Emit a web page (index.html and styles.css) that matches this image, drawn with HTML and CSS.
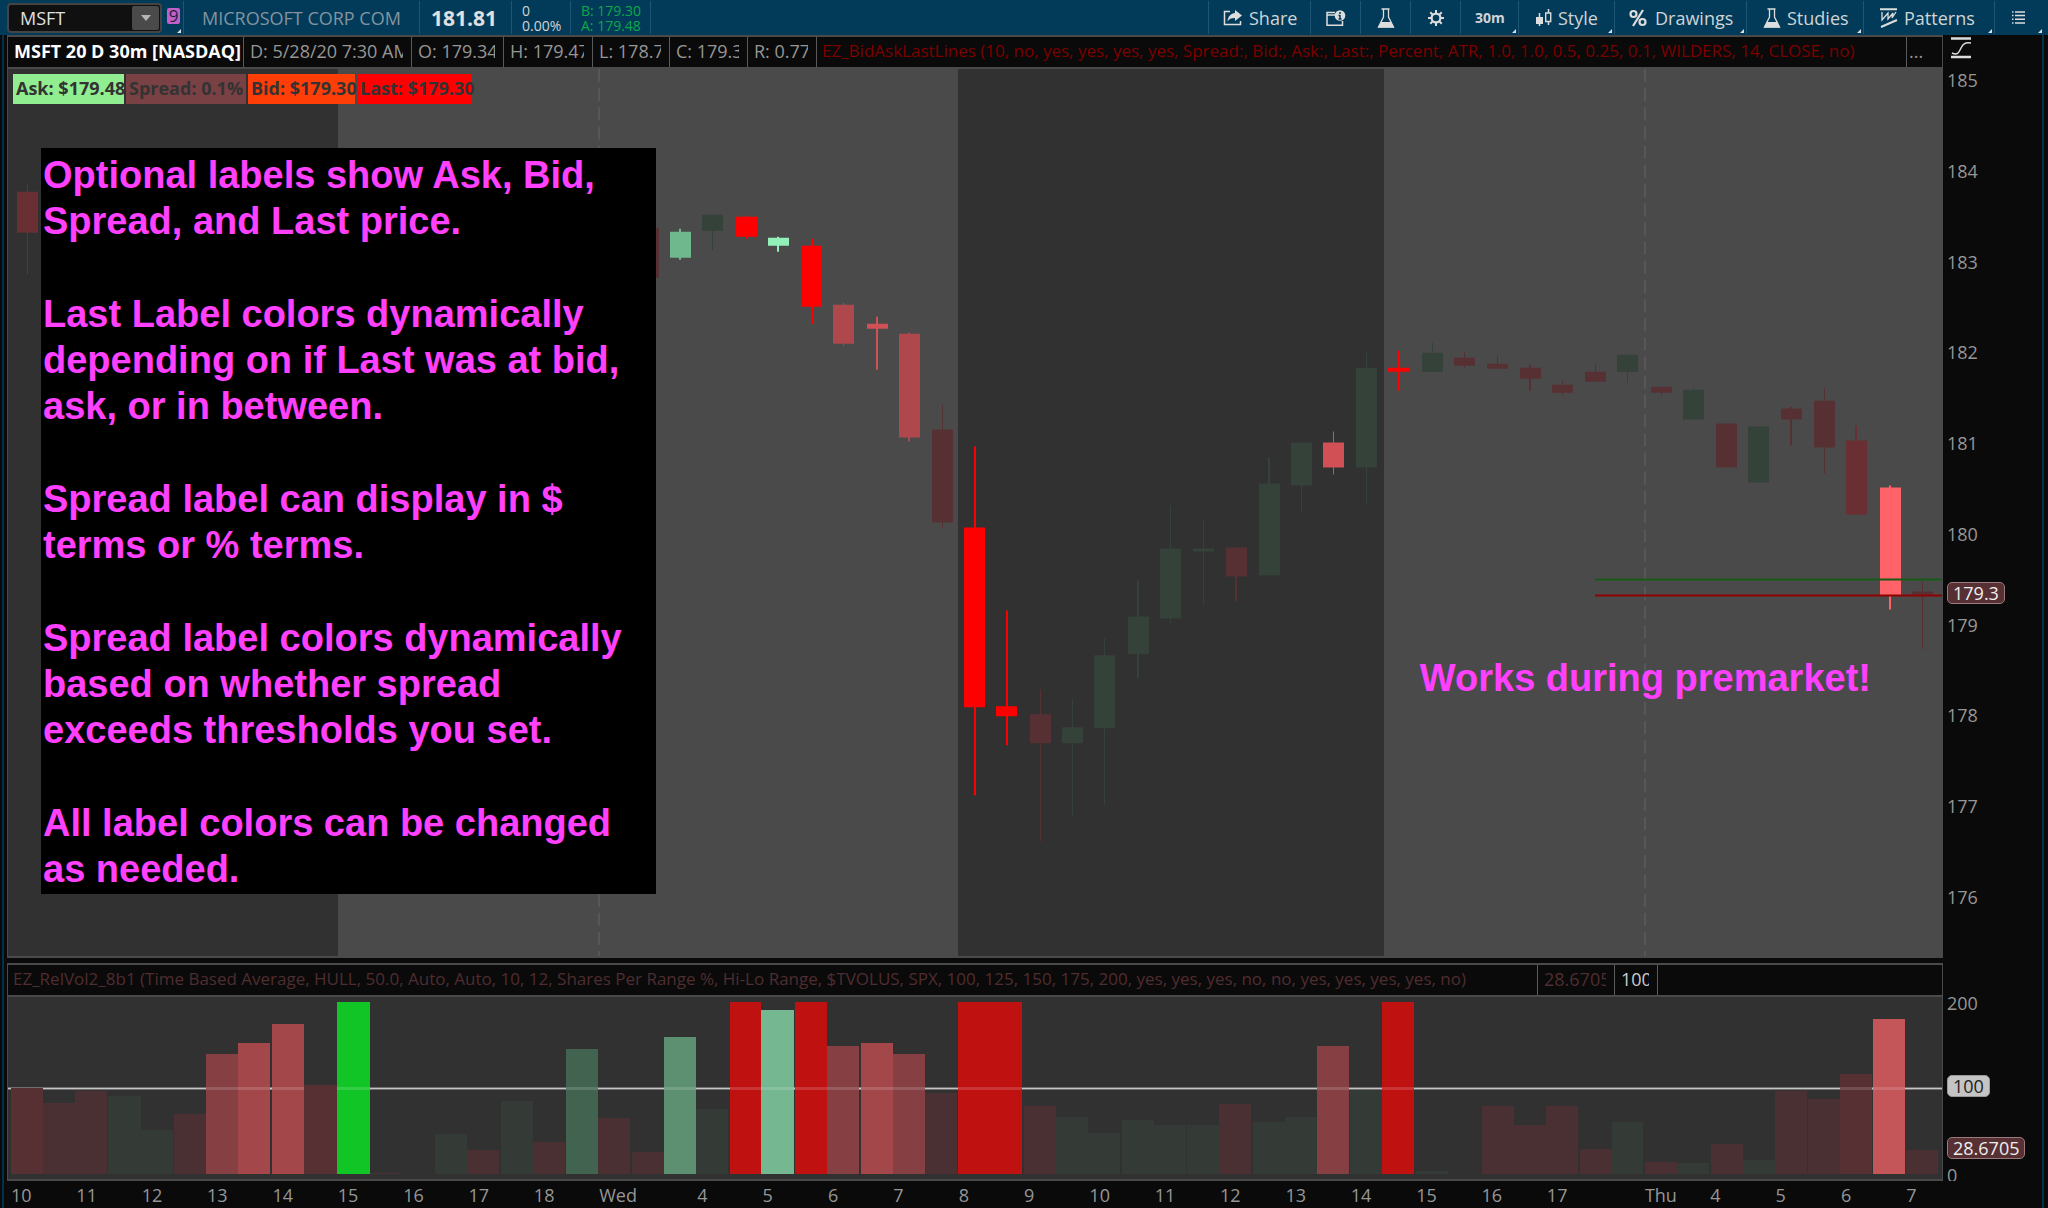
FILE: index.html
```html
<!DOCTYPE html>
<html lang="en">
<head>
<meta charset="utf-8">
<title>MSFT chart</title>
<link rel="stylesheet" href="styles.css">
</head>
<body>
<header class="toolbar">
  <div class="symbol">
    <input class="symbol-input" type="text" value="MSFT" aria-label="Symbol">
    <button class="symbol-drop" aria-label="Recent symbols"><svg width="10" height="6" viewBox="0 0 10 6"><path d="M0 0h10L5 6z" fill="#b5b5b5"/></svg></button>
  </div>
  <button class="link-badge has-menu" aria-label="Link group 9"><span class="badge-num">9</span></button>
  <div class="cell company">MICROSOFT CORP COM</div>
  <div class="cell last">181.81</div>
  <div class="cell change"><span>0</span><span>0.00%</span></div>
  <div class="cell quote"><span>B: 179.30</span><span>A: 179.48</span></div>
  <div class="cell spacer"></div>
  <button class="cell tool share"><svg width="20" height="16" viewBox="0 0 20 16"><path d="M7 1.500H1.500v13h16V11" fill="none" stroke="#ddd" stroke-width="1.500"/><path d="M12 0l7 5.500-7 5.500V8C8 8 6 9 4.500 11.500 5 6 8 3.500 12 3z" fill="#ddd"/></svg>Share</button>
  <button class="cell tool icon-only" aria-label="Chart info"><svg width="20" height="16" viewBox="0 0 20 16"><path d="M9 2.500H1v12.700h15.500V11M1 5h8" fill="none" stroke="#ddd" stroke-width="1.500"/><circle cx="14" cy="5.500" r="5.300" fill="#ddd"/><path d="M14 2v2M14 5v4.500M12.500 5.500H14M12.500 9h3" stroke="#023a58" stroke-width="1.500"/></svg></button>
  <button class="cell tool icon-only" aria-label="Edit studies"><svg width="18" height="20" viewBox="0 0 18 20"><path d="M4.500 1h8M6.500 1v8L1.500 19h15L11.500 9V1" fill="none" stroke="#ddd" stroke-width="1.300"/><path d="M4 14h10l3 5.500H1z" fill="#ddd"/></svg></button>
  <button class="cell tool icon-only" aria-label="Settings"><svg width="18" height="18" viewBox="0 0 18 18"><circle cx="9" cy="9" r="4.400" fill="none" stroke="#ddd" stroke-width="2.200"/><path d="M9 1v3M9 14v3M1 9h3M14 9h3M3.300 3.300l2.300 2.300M12.400 12.400l2.300 2.300M3.300 14.700l2.300-2.300M12.400 5.600l2.300-2.300" stroke="#ddd" stroke-width="2"/></svg></button>
  <button class="cell tool interval has-menu">30m</button>
  <button class="cell tool style has-menu"><svg width="16" height="18" viewBox="0 0 16 18"><path d="M3.500 4v13M12.500 0v4M12.500 12v4" stroke="#ddd" stroke-width="1.500"/><path d="M0 8h7v7H0z" fill="#ddd"/><path d="M9.700 4h5v8.500h-5z" fill="none" stroke="#ddd" stroke-width="1.400"/></svg>Style</button>
  <button class="cell tool drawings has-menu"><svg width="18" height="18" viewBox="0 0 18 18" fill="none" stroke="#ddd" stroke-width="2.200"><circle cx="4.500" cy="5" r="3"/><circle cx="13.500" cy="13" r="3"/><path d="M14 1L4 17"/></svg>Drawings</button>
  <button class="cell tool studies has-menu"><svg width="18" height="20" viewBox="0 0 18 20"><path d="M4.500 1h8M6.500 1v8L1.500 19h15L11.500 9V1" fill="none" stroke="#ddd" stroke-width="1.300"/><path d="M4 14h10l3 5.500H1z" fill="#ddd"/></svg>Studies</button>
  <button class="cell tool patterns has-menu"><svg width="18" height="20" viewBox="0 0 18 20" fill="none" stroke="#ddd"><path d="M0 1.200h17M1 19L17 12" stroke-width="2"/><path d="M2 4v8L8 5v6l5-6-1 5 4-6" stroke-width="1.300"/></svg>Patterns</button>
  <button class="cell tool menu has-menu" aria-label="Menu"><svg width="13" height="13" viewBox="0 0 13 13" stroke="#ddd" stroke-width="1.500"><path d="M3 1h10M3 4.600h10M3 8.300h10M3 12h10"/><path d="M0 1h1.500M0 4.600h1.500M0 8.300h1.500M0 12h1.500"/></svg></button>
</header>

<main class="workspace">
  <section class="pane price-pane">
    <div class="info-row">
      <h1 class="info title">MSFT 20 D 30m [NASDAQ]</h1>
      <div class="info date"><span>D: 5/28/20 7:30 AM</span></div>
      <div class="info open"><span>O: 179.34</span></div>
      <div class="info high"><span>H: 179.47</span></div>
      <div class="info low"><span>L: 178.7</span></div>
      <div class="info close"><span>C: 179.35</span></div>
      <div class="info range"><span>R: 0.77</span></div>
      <div class="info study"><span>EZ_BidAskLastLines (10, no, yes, yes, yes, yes, Spread:, Bid:, Ask:, Last:, Percent, ATR, 1.0, 1.0, 0.5, 0.25, 0.1, WILDERS, 14, CLOSE, no)</span></div>
      <div class="info more">...</div>
    </div>
    <div class="plot price-plot">
      <svg class="plot-svg" viewBox="8 69 1934 888" preserveAspectRatio="none" aria-hidden="true">
        <path fill="#313131" d="M8 69h330v888H8zM958 69h426v888H958z"/>
        <path fill="#4a4a4a" d="M338 69h620v888H338zM1384 69h558v888h-558z"/>
        <path stroke="#575757" stroke-width="2" stroke-dasharray="13 6.200" d="M599 69v888M1645 69v888"/>
        <g fill="#573034" stroke="none">
          <path d="M638 228h21v50h-21zM932 430h21v93h-21zM942 405h1v124h-1zM1030 715h21v29h-21zM1040 690h1v152h-1zM1226 548h21v29h-21zM1235 577h2v25h-2z"/>
          <path d="M1454 358h21v8h-21zM1464 352h1v17h-1zM1487 364h21v5h-21zM1497 356h1v12h-1zM1520 368h21v11h-21zM1529 365h2v26h-2zM1552 385h21v8h-21zM1562 381h1v15h-1zM1585 372h21v10h-21zM1595 365h1v9h-1zM1651 387h21v6h-21zM1661 393h1v4h-1zM1716 424h21v44h-21zM1781 409h21v11h-21zM1790 407h2v39h-2zM1814 401h21v47h-21zM1824 388h1v86h-1zM1912 592h21v3h-21zM1922 582h1v68h-1z"/>
        </g>
        <path fill="#692f33" d="M17 192h21v41H17zM27 184h1v91h-1zM1846 441h21v74h-21zM1855 426h2v16h-2z"/>
        <path fill="#344239" d="M702 215h21v16h-21zM712 231h1v19h-1zM1062 728h21v16h-21zM1072 700h1v116h-1zM1094 656h21v73h-21zM1104 639h1v166h-1zM1128 617h21v38h-21zM1137 581h2v98h-2zM1160 549h21v70h-21zM1170 506h1v118h-1zM1193 549h21v3h-21zM1203 520h1v85h-1zM1259 484h21v92h-21zM1268 458h2v26h-2zM1291 443h21v43h-21zM1301 486h1v28h-1zM1356 368h21v100h-21zM1366 352h1v152h-1zM1422 353h21v19h-21zM1432 343h1v10h-1zM1617 355h21v17h-21zM1627 372h1v11h-1zM1683 390h21v30h-21zM1693 388h1v2h-1zM1748 427h21v56h-21z"/>
        <path fill="#6fb88e" d="M670 232h21v26h-21zM679 229h2v31h-2z"/>
        <path fill="#92f0b8" d="M768 238h21v8h-21zM777 237h2v15h-2z"/>
        <path fill="#ae484c" d="M833 305h21v39h-21zM843 303h1v43h-1zM899 334h21v104h-21zM908 333h2v109h-2z"/>
        <path fill="#d05056" d="M867 324h21v5h-21zM876 317h2v53h-2zM1323 443h21v25h-21zM1333 432h1v43h-1z"/>
        <path fill="#ff6369" d="M1880 488h21v108h-21zM1889 486h2v124h-2z"/>
        <path fill="#f00" d="M736 217h21v20h-21zM745 216h2v23h-2zM801 246h21v61h-21zM811 239h2v85h-2zM964 528h21v180h-21zM974 447h2v349h-2zM996 707h21v10h-21zM1006 611h2v135h-2zM1388 368h21v4h-21zM1398 351h2v40h-2z"/>
        <path fill="#155a15" d="M1595 579h347v2h-347z"/>
        <path fill="#8f0000" d="M1595 595h347v2h-347z"/>
      </svg>
      <div class="tags">
        <span class="tag ask">Ask: $179.48</span>
        <span class="tag spread">Spread: 0.1%</span>
        <span class="tag bid">Bid: $179.30</span>
        <span class="tag last-tag">Last: $179.30</span>
      </div>
      <div class="note">
        <p>Optional labels show Ask, Bid,<br>Spread, and Last price.</p>
        <p>Last Label colors dynamically<br>depending on if Last was at bid,<br>ask, or in between.</p>
        <p>Spread label can display in $<br>terms or % terms.</p>
        <p>Spread label colors dynamically<br>based on whether spread<br>exceeds thresholds you set.</p>
        <p>All label colors can be changed<br>as needed.</p>
      </div>
      <p class="premarket">Works during premarket!</p>
    </div>
  </section>
  <aside class="axis price-axis">
    <svg class="fit" width="20" height="22" viewBox="0 0 20 22" fill="none" stroke="#ddd"><path d="M0 1.500h20M0 20h20" stroke-width="2.500"/><path d="M1 16c6 3 7-1 9-5s4-6 10-5" stroke-width="1.500"/></svg>
    <ol class="prices"><li>185</li><li>184</li><li>183</li><li>182</li><li>181</li><li>180</li><li>179</li><li>178</li><li>177</li><li>176</li></ol>
    <span class="bubble price-bubble">179.3</span>
  </aside>
  <div class="splitter"></div>
  <section class="pane volume-pane">
    <div class="info-row">
      <div class="info vol-study"><span>EZ_RelVol2_8b1 (Time Based Average, HULL, 50.0, Auto, Auto, 10, 12, Shares Per Range %, Hi-Lo Range, $TVOLUS, SPX, 100, 125, 150, 175, 200, yes, yes, yes, no, no, yes, yes, yes, yes, no)</span></div>
      <div class="info vol-value"><span>28.6705</span></div>
      <div class="info vol-base"><span>100</span></div>
      <div class="info rest"></div>
    </div>
    <div class="plot volume-plot">
      <svg class="plot-svg" viewBox="8 997 1934 182" preserveAspectRatio="none" aria-hidden="true">
        <path fill="#313131" d="M8 997h1934v182H8z"/>
        <path fill="#6f6f6f" d="M8 1087h1934v3H8z"/>
        <path fill="#c4c4c4" d="M8 1088h1934v1H8z"/>
        <path fill="#4a3033" d="M43 1103h32v71h-32zM75 1091h32v83h-32zM174 1114h32v60h-32zM370 1173h31v1h-31zM467 1150h32v24h-32zM533 1142h32v32h-32zM598 1118h32v56h-32zM632 1152h32v22h-32zM925 1093h32v81h-32zM1024 1106h32v68h-32zM1219 1104h32v70h-32zM1482 1106h32v68h-32zM1514 1125h32v49h-32zM1546 1106h32v68h-32zM1580 1149h32v25h-32zM1645 1162h32v12h-32zM1711 1144h32v30h-32zM1775 1091h32v83h-32zM1808 1099h32v75h-32zM1906 1150h32v24h-32z"/>
        <path fill="#343b37" d="M108 1096h33v78h-33zM141 1130h32v44h-32zM435 1134h32v40h-32zM501 1101h32v73h-32zM696 1109h32v65h-32zM1056 1117h32v57h-32zM1088 1133h32v41h-32zM1122 1120h32v54h-32zM1154 1125h32v49h-32zM1187 1125h32v49h-32zM1253 1122h32v52h-32zM1285 1117h32v57h-32zM1350 1090h32v84h-32zM1416 1171h32v3h-32zM1612 1122h31v52h-31zM1677 1163h32v11h-32zM1743 1160h32v14h-32z"/>
        <path fill="#573034" d="M11 1088h32v86H11zM304 1085h33v89h-33zM1840 1074h32v100h-32z"/>
        <path fill="#863f43" d="M206 1054h32v120h-32zM827 1046h32v128h-32zM893 1054h32v120h-32zM1317 1046h32v128h-32z"/>
        <path fill="#a4474b" d="M238 1043h32v131h-32zM272 1024h32v150h-32zM861 1043h32v131h-32z"/>
        <path fill="#c45559" d="M1873 1019h32v155h-32z"/>
        <path fill="#c01111" d="M730 1002h31v172h-31zM795 1002h32v172h-32zM958 1002h64v172h-64zM1382 1002h32v172h-32z"/>
        <path fill="#11c526" d="M337 1002h33v172h-33z"/>
        <path fill="#426350" d="M566 1049h32v125h-32z"/>
        <path fill="#5d9071" d="M664 1037h32v137h-32z"/>
        <path fill="#74b790" d="M761 1010h33v164h-33z"/>
        <path fill="#fff" fill-opacity="0.15" d="M206 1087h98v3h-98zM337 1087h33v3h-33zM566 1087h32v3h-32zM664 1087h32v3h-32zM730 1087h195v3h-195zM958 1087h64v3h-64zM1317 1087h32v3h-32zM1382 1087h32v3h-32zM1840 1087h65v3h-65z"/>
      </svg>
    </div>
  </section>
  <aside class="axis volume-axis">
    <span class="tick">200</span>
    <span class="bubble base-bubble">100</span>
    <span class="bubble value-bubble">28.6705</span>
    <span class="tick zero">0</span>
  </aside>
  <ol class="times">
    <li style="grid-column:1">10</li><li style="grid-column:3">11</li><li style="grid-column:5">12</li><li style="grid-column:7">13</li><li style="grid-column:9">14</li><li style="grid-column:11">15</li><li style="grid-column:13">16</li><li style="grid-column:15">17</li><li style="grid-column:17">18</li><li style="grid-column:19">Wed</li><li style="grid-column:22">4</li><li style="grid-column:24">5</li><li style="grid-column:26">6</li><li style="grid-column:28">7</li><li style="grid-column:30">8</li><li style="grid-column:32">9</li><li style="grid-column:34">10</li><li style="grid-column:36">11</li><li style="grid-column:38">12</li><li style="grid-column:40">13</li><li style="grid-column:42">14</li><li style="grid-column:44">15</li><li style="grid-column:46">16</li><li style="grid-column:48">17</li><li style="grid-column:51">Thu</li><li style="grid-column:53">4</li><li style="grid-column:55">5</li><li style="grid-column:57">6</li><li style="grid-column:59">7</li>
  </ol>
</main>
</body>
</html>
```
FILE: styles.css
```css
* { box-sizing: border-box; }
html, body { height: 100%; }
body {
  margin: 0;
  display: flex;
  flex-direction: column;
  background: #0a0a0a;
  color: #969696;
  font: 18px/24px "Open Sans", "Noto Sans", sans-serif;
  overflow: hidden;
}
h1, p, ol { margin: 0; padding: 0; list-style: none; }
button, input { font: inherit; color: inherit; border: 0; margin: 0; padding: 0; background: none; }

/* toolbar */
.toolbar {
  flex: none;
  display: flex;
  align-items: stretch;
  height: 35px;
  padding: 1px 4px 1px 7px;
  background: #023b59;
  color: #d0d4d6;
}
.symbol {
  display: flex;
  width: 155px;
  margin: 2px 0 1px;
  background: #101010;
  border: 2px solid #444;
  border-radius: 4px;
}
.symbol-input { flex: 1; min-width: 0; padding-left: 11px; color: #e0e0e0; }
.symbol-drop {
  width: 27px;
  margin: 1px;
  display: flex;
  align-items: center;
  justify-content: center;
  background: #4a4a4a;
  border-radius: 2px;
}
.has-menu { position: relative; }
.has-menu::after {
  content: "";
  position: absolute;
  right: 2px;
  bottom: 1px;
  border: 2px solid transparent;
  border-right-color: #ddd;
  border-bottom-color: #ddd;
}
.link-badge { width: 21px; display: flex; padding: 7px 0 0 5px; }
.badge-num {
  width: 13px;
  height: 16px;
  background: #c25fc8;
  border-radius: 2px;
  color: #1b2440;
  font-size: 17px;
  line-height: 16px;
}
.cell {
  display: flex;
  align-items: center;
  border-left: 1px solid #1d5575;
  white-space: nowrap;
}
.company { width: 236px; padding-left: 18px; color: #8294a0; }
.last { width: 92px; padding-left: 11px; font-size: 21px; font-weight: 700; color: #e0e0e0; }
.change, .quote { flex-direction: column; align-items: flex-start; justify-content: center; font-size: 14px; line-height: 15px; padding-left: 10px; }
.change { width: 59px; }
.quote { width: 80px; color: #0ba84a; }
.quote span { width: 60px; overflow: hidden; }
.spacer { flex: 1; }
.tool { gap: 6px; padding-left: 14px; }
.share { width: 102px; }
.icon-only { width: 50px; padding: 0; justify-content: center; }
.interval { width: 58px; font-size: 14px; font-weight: 700; }
.style { width: 96px; padding-left: 17px; }
.drawings { width: 132px; gap: 8px; }
.studies { width: 117px; padding-left: 16px; }
.patterns { width: 131px; padding-left: 16px; }
.menu { width: 50px; padding-left: 17px; }

/* chart grid */
.workspace {
  flex: 1;
  min-height: 0;
  display: grid;
  grid-template-columns: 1fr 99px;
  grid-template-rows: 1fr 5px 218px 27px;
  margin: 0 4px 0 2px;
  padding-left: 3px;
  border-left: 2px solid #03304a;
  border-right: 2px solid #03304a;
}
.pane {
  display: flex;
  flex-direction: column;
  min-width: 0;
  min-height: 0;
  border: 1px solid #4a4a4a;
  border-width: 2px 1px;
}
.info-row {
  flex: none;
  display: flex;
  height: 32px;
  border-bottom: 2px solid #4a4a4a;
}
.info {
  flex: none;
  padding: 2px 8px 4px 6px;
  border-right: 1px solid #5a5a5a;
  white-space: nowrap;
  overflow: hidden;
}
.info span { display: block; overflow: hidden; }
.title { width: 236px; padding-right: 0; font-size: 18px; line-height: 24px; color: #fff; }
.date { width: 168px; }
.open { width: 92px; }
.high { width: 89px; }
.low { width: 77px; }
.close { width: 78px; }
.range { width: 69px; }
.study { flex: 1 1 0; color: #7b0000; }
.study, .vol-study { padding-left: 5px; font-size: 17px; }
.more { width: 35px; padding-left: 2px; padding-right: 0; border-right: 0; }
.vol-study { width: 1530px; flex-shrink: 1; color: #4f2d30; }
.vol-value { width: 77px; color: #4f2d30; }
.vol-base { width: 43px; color: #ccc; }
.rest { flex: 1; border: 0; }

.plot { flex: 1; min-height: 0; position: relative; }
.plot-svg { position: absolute; width: 100%; height: 100%; }
.tags { position: relative; display: flex; gap: 2px; padding: 5px 0 0 5px; }
.tag {
  height: 30px;
  padding-left: 3px;
  line-height: 29px;
  font-weight: 700;
  color: #333;
  white-space: nowrap;
}
.ask { width: 111px; background: #90ee90; }
.spread { width: 120px; background: #7a4145; }
.bid { width: 107px; background: #ff3d06; }
.last-tag { width: 115px; background: #f00; }
.note, .premarket {
  position: absolute;
  color: #ff40ff;
  font: 700 38px/46px "Liberation Sans", Arial, sans-serif;
  white-space: nowrap;
}
.note {
  left: 33px;
  top: 79px;
  width: 615px;
  padding: 4px 2px 2px;
  background: #000;
}
.note p + p { margin-top: 47px; }
.premarket { left: 73%; top: 586px; }

/* axes */
.axis { position: relative; padding-left: 4px; }
.fit { position: absolute; left: 8px; top: 2px; }
.prices {
  display: flex;
  flex-direction: column;
  justify-content: space-between;
  height: calc(100% - 82px);
  margin-top: 33px;
}
.bubble {
  position: absolute;
  left: 4px;
  padding: 0 5px;
  height: 22px;
  line-height: 20px;
  border: 1px solid #9a7a7c;
  border-radius: 5px;
  background: #573034;
  color: #eee;
}
.price-bubble { top: 547px; }
.splitter { grid-column: 1 / -1; }
.volume-axis { display: flex; flex-direction: column; justify-content: space-between; padding-top: 28px; overflow: hidden; }
.base-bubble { top: 112px; background: #c4c4c4; border-color: #999; color: #222; }
.value-bubble { top: 174px; }
.zero { height: 16px; line-height: 20px; overflow: hidden; }
.times {
  grid-column: 1;
  display: grid;
  grid-template-columns: repeat(59, minmax(0, 1fr));
  padding: 2px 4px 0;
  white-space: nowrap;
}
```
